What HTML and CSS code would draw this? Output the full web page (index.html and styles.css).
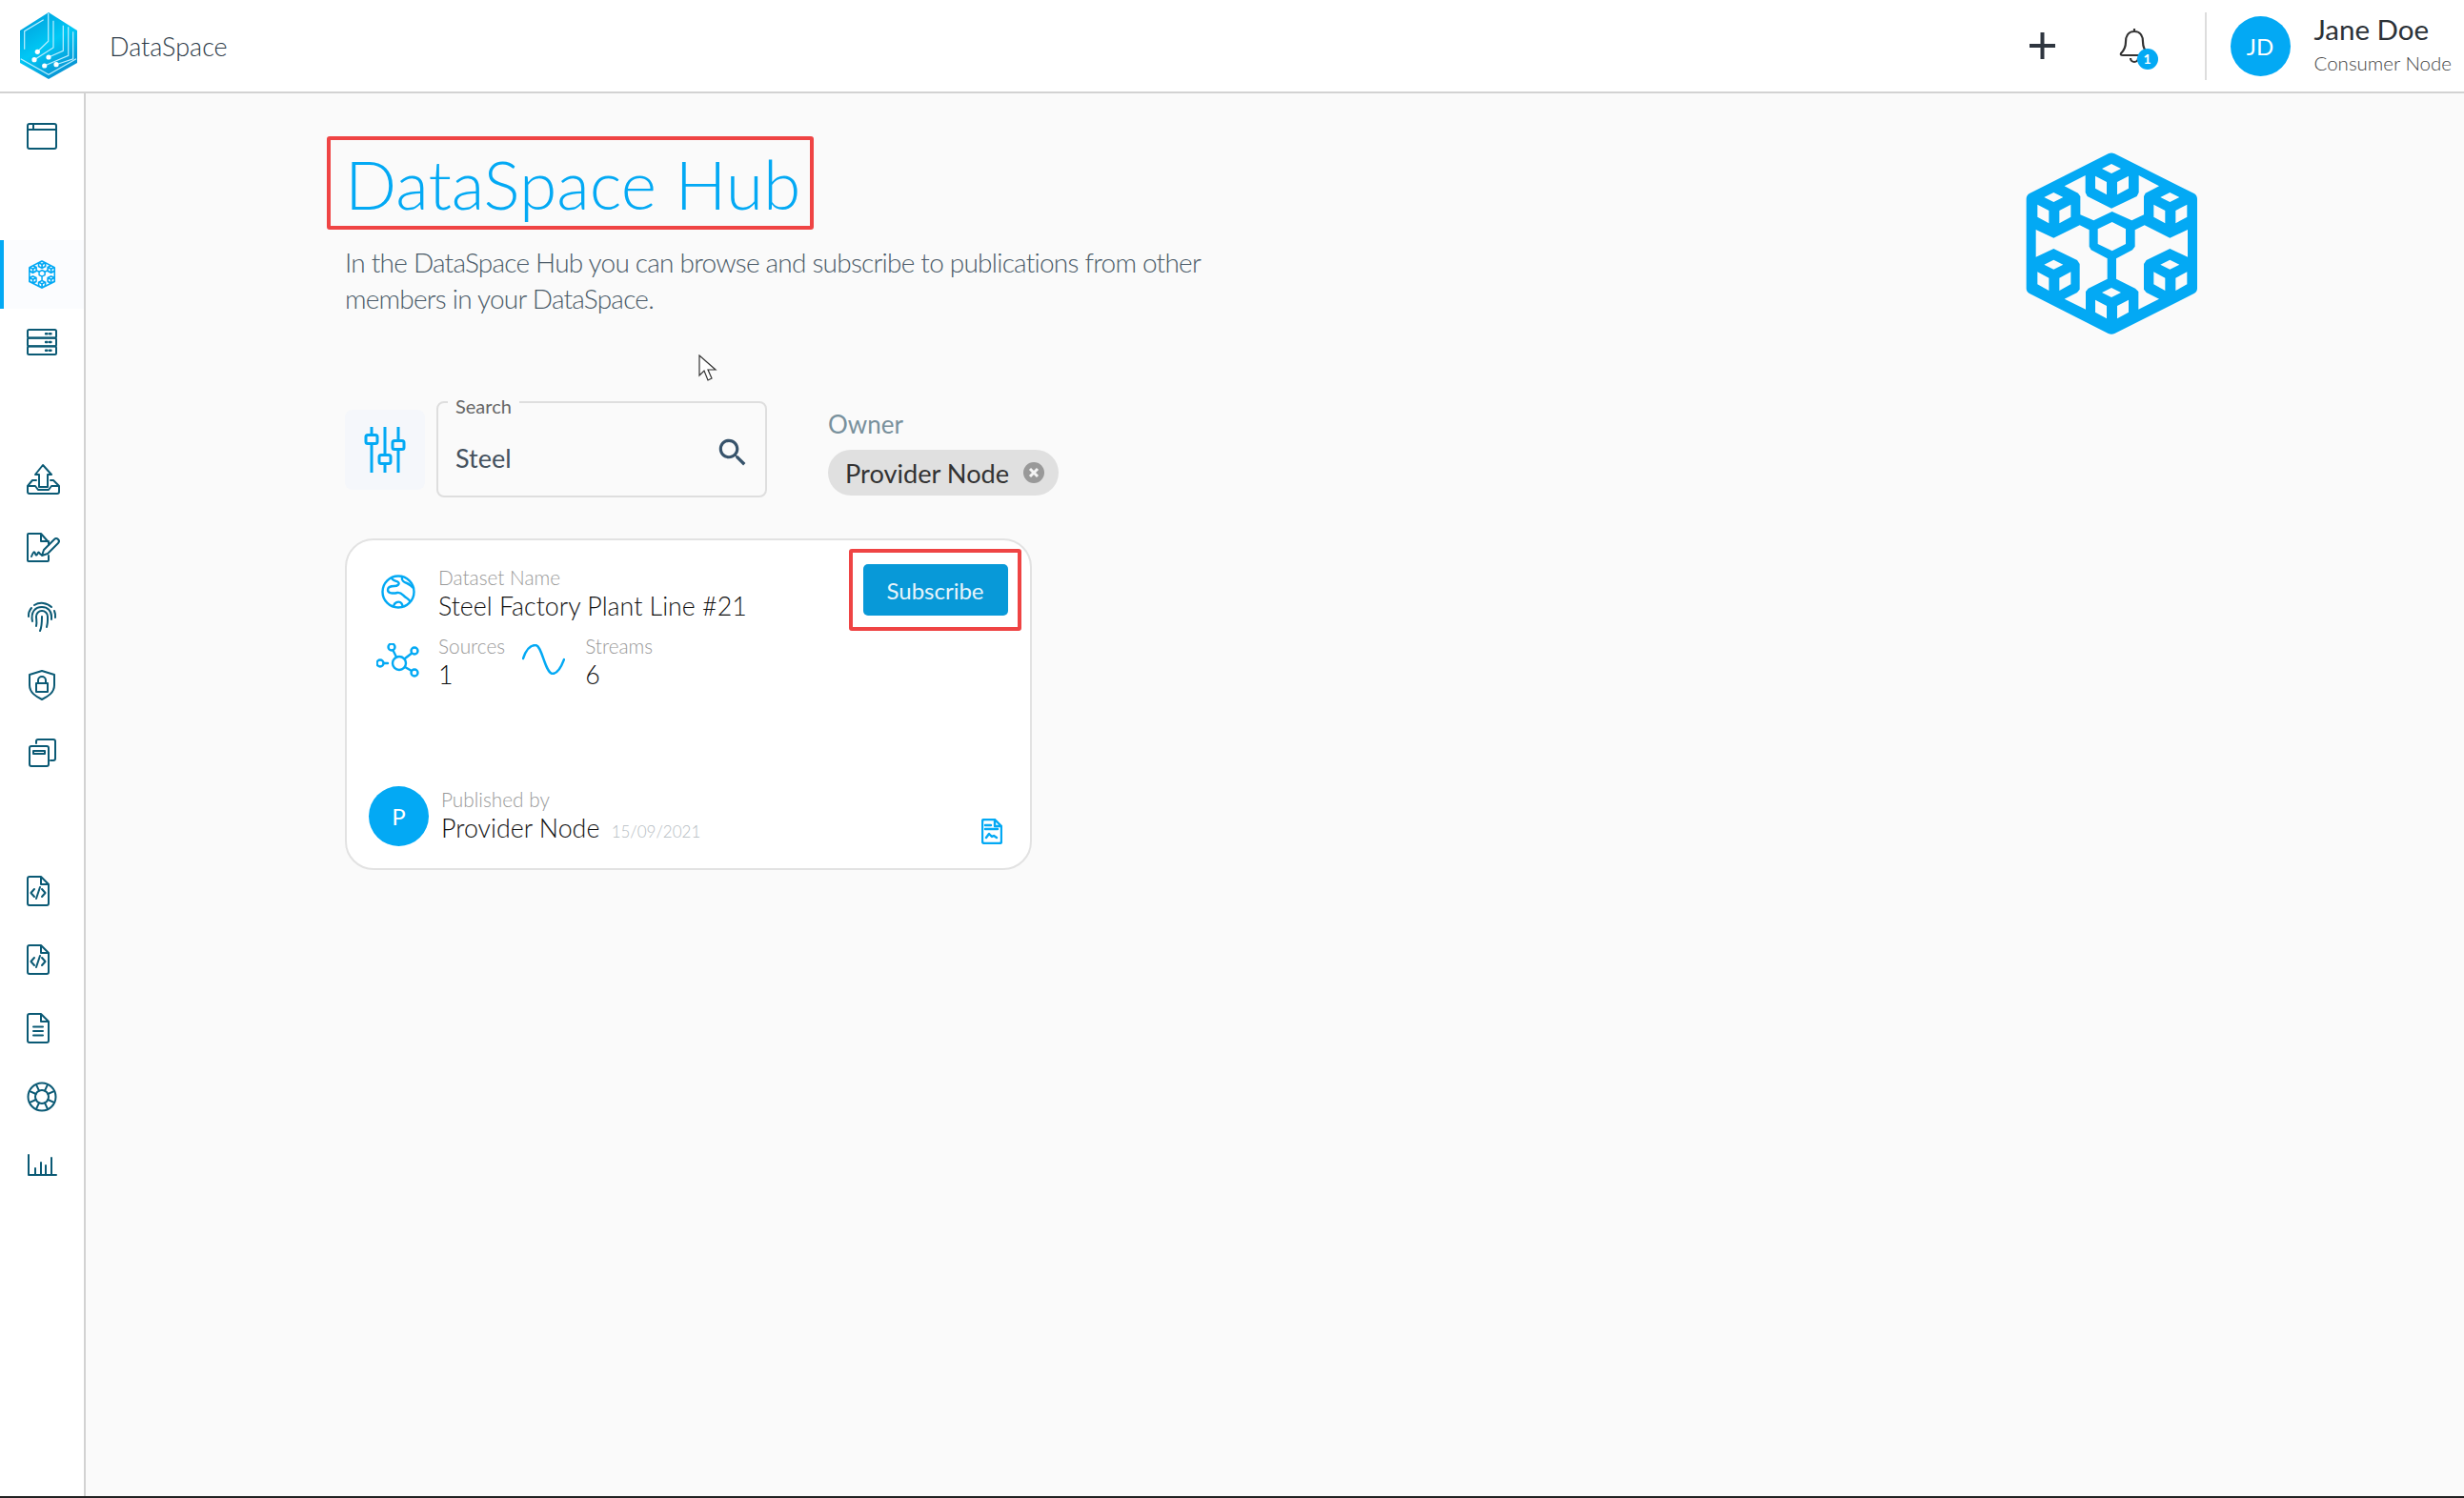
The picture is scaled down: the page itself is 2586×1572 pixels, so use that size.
FILE: index.html
```html
<!DOCTYPE html>
<html lang="en">
<head>
    <meta charset="UTF-8">
    <title>DataSpace Hub</title>
    <link rel="stylesheet" href="styles.css">
</head>
<body>
    <!-- shared hub glyph, used in the sidebar and the page head -->
    <svg class="defs" width="0" height="0">
        <symbol id="hub" viewBox="60 56 576 576">
            <path fill-rule="evenodd" d="M338 63Q348 58 358 63L608 188Q618 194 618 205V487Q618 497 608 503L358 629Q348 634 338 629L90 503Q80 497 80 487V205Q80 194 90 188Z
            M348 95l30 15-30 15-30-15z M297 133l36 19v40l-36-20z M402 133l-36 19v40l36-20z
            M166 185l30 15-30 15-30-15z M115 223l36 19v40l-36-20z M220 223l-36 19v40l36-20z
            M532 185l30 15-30 15-30-15z M481 223l36 19v40l-36-20z M586 223l-36 19v40l36-20z
            M166 397l30 15-30 15-30-15z M115 435l36 19v40l-36-20z M220 435l-36 19v40l36-20z
            M532 397l30 15-30 15-30-15z M481 435l36 19v40l-36-20z M586 435l-36 19v40l36-20z
            M348 485l30 15-30 15-30-15z M297 523l36 19v40l-36-20z M402 523l-36 19v40l36-20z
            M350 278L393 300V347L350 369L305 347V300Z
            M200 165L266 131V185L272 197L348 235L428 197L434 185V131L498 165L455 187L450 197V255L412 273L350 245L292 273L250 255V197L243 187Z
            M110 302L166 328L248 288L278 303V355L284 366L335 393V457L275 487L267 497V553L200 520L240 500L248 490V410L240 398L166 362L110 388Z
            M588 302L532 328L452 288L422 303V355L414 366L363 393V457L423 487L433 497V553L498 520L458 500L450 490V410L458 398L532 362L588 388Z"/>
        </symbol>
        <linearGradient id="logoFill" x1="0.2" y1="0.1" x2="0.7" y2="1">
            <stop offset="0" stop-color="#00a6e0"/>
            <stop offset="0.45" stop-color="#00c8f5"/>
            <stop offset="1" stop-color="#0a8fd0"/>
        </linearGradient>
    </svg>

    <header class="topbar">
        <div class="brand">
            <svg class="brand-logo" viewBox="0 0 62 70" width="62" height="70">
                <path fill="url(#logoFill)" d="M31 0L61 19V53L31 70L1 53V19Z"/>
                <g fill="none" stroke="#bdefff" stroke-width="1.2">
                    <path d="M25.7 7.7L5.7 19.7V38.7"/>
                    <path d="M30.7 1V30.3L19.3 41.3"/>
                    <path d="M36 8.7V37L16 49.7"/>
                    <path d="M46.3 13.7V40.3L31 47"/>
                    <path d="M51.7 15.3V45.3L26.7 56"/>
                    <path d="M56.7 20.3V48.7L39 54.7"/>
                    <path d="M1.7 48.7L31 65.3L60 48.7"/>
                </g>
                <g fill="#fff">
                    <circle cx="19.3" cy="41.3" r="2.6"/>
                    <circle cx="16" cy="49.7" r="2.6"/>
                    <circle cx="31" cy="47" r="2.6"/>
                    <circle cx="26.7" cy="56" r="2.6"/>
                    <circle cx="39" cy="54.7" r="2.6"/>
                </g>
            </svg>
            <span class="brand-name">DataSpace</span>
        </div>
        <div class="topbar-actions">
            <svg class="plus-icon" viewBox="0 0 27 28" width="27" height="28">
                <path d="M13.5 0V28M0 14H27"/>
            </svg>
            <div class="bell">
                <svg viewBox="0 0 32 38" width="32" height="38">
                    <path d="M16 1V4M16 4C9 4 7 10 7 15C7 21 5 24 2 27Q1 29 4 29H28Q31 29 30 27C27 24 25 21 25 15C25 10 23 4 16 4ZM12 32A4 4 0 0 0 20 32"/>
                </svg>
                <span class="bell-badge">1</span>
            </div>
            <div class="user">
                <div class="avatar avatar-user">JD</div>
                <div class="user-text">
                    <div class="user-name">Jane Doe</div>
                    <div class="user-role">Consumer Node</div>
                </div>
            </div>
        </div>
    </header>

    <div class="layout">
        <nav class="sidebar">
            <a class="nav-item">
                <svg class="nav-icon" viewBox="0 0 34 34"><rect x="2" y="4" width="30" height="26" rx="2"/><path d="M2 10H32M8 4V10"/></svg>
            </a>
            <div class="nav-gap"></div>
            <a class="nav-item active">
                <svg class="hub-small"><use href="#hub"/></svg>
            </a>
            <a class="nav-item">
                <svg class="nav-icon" viewBox="0 0 34 34"><rect x="2" y="4" width="30" height="8.5" rx="1.5"/><rect x="2" y="12.8" width="30" height="8.5" rx="1.5"/><rect x="2" y="21.5" width="30" height="8.5" rx="1.5"/><path class="dots" d="M21 8.2h1.5M25 8.2h1.5M21 17h1.5M25 17h1.5M21 25.8h1.5M25 25.8h1.5"/></svg>
            </a>
            <div class="nav-gap"></div>
            <a class="nav-item">
                <svg class="nav-icon" viewBox="0 0 34 34"><path d="M18 2L27 12H23V25H14V12H10Z"/><path d="M11 18H7L2 24V30A2 2 0 0 0 4 32H33A2 2 0 0 0 35 30V24L29 18H26M2 24H10L13 28H24L27 24H35"/></svg>
            </a>
            <a class="nav-item">
                <svg class="nav-icon" viewBox="0 0 34 34"><path d="M24 25V30A1 1 0 0 1 23 31H3A1 1 0 0 1 2 30V3A1 1 0 0 1 3 2H16L24 11V14M16 2V10H24"/><path d="M17 25L19 19L30 8A2.5 2.5 0 0 1 34 12L23 23Z"/><path d="M6 26C8 21 9 20 10 23S12 24 13 22S15 25 17 24"/></svg>
            </a>
            <a class="nav-item">
                <svg class="nav-icon" viewBox="0 0 34 34"><path d="M3 17A14 13 0 0 1 6 8M9 5A14 13 0 0 1 27 7M30 11A14 14 0 0 1 31 18M7 22C5 12 10 7 17 7C23 7 27 11 27 17V20M11 27C12 23 11 20 11 17A6 6 0 0 1 23 17V21C23 24 22.5 26 22 28M15 32C17 28 17 22 17 17"/></svg>
            </a>
            <a class="nav-item">
                <svg class="nav-icon" viewBox="0 0 34 34"><path d="M17 2L30 6V17C30 25 23 29 17 32C11 29 4 25 4 17V6Z"/><rect x="11" y="15" width="12" height="9"/><path d="M13 15V12A4 4 0 0 1 21 12V15"/></svg>
            </a>
            <a class="nav-item">
                <svg class="nav-icon" viewBox="0 0 34 34"><path d="M11 6V4A2 2 0 0 1 13 2H29A2 2 0 0 1 31 4V22A2 2 0 0 1 29 24H26"/><rect x="4" y="9" width="20" height="21" rx="2"/><path d="M8 14H20V17H8Z"/></svg>
            </a>
            <div class="nav-gap"></div>
            <a class="nav-item">
                <svg class="nav-icon" viewBox="0 0 34 34"><path d="M4 2H16L24 10V30A2 2 0 0 1 22 32H4A2 2 0 0 1 2 30V4A2 2 0 0 1 4 2ZM16 2V10H24"/><path d="M9 15L5.5 19L9 23M17 15L20.500 19L17 23M15 13L11 25"/></svg>
            </a>
            <a class="nav-item">
                <svg class="nav-icon" viewBox="0 0 34 34"><path d="M4 2H16L24 10V30A2 2 0 0 1 22 32H4A2 2 0 0 1 2 30V4A2 2 0 0 1 4 2ZM16 2V10H24"/><path d="M9 15L5.5 19L9 23M17 15L20.500 19L17 23M15 13L11 25"/></svg>
            </a>
            <a class="nav-item">
                <svg class="nav-icon" viewBox="0 0 34 34"><path d="M4 2H16L24 10V30A2 2 0 0 1 22 32H4A2 2 0 0 1 2 30V4A2 2 0 0 1 4 2ZM16 2V10H24"/><path d="M8 15.500H18M8 20H18M8 24.500H18"/></svg>
            </a>
            <a class="nav-item">
                <svg class="nav-icon" viewBox="0 0 34 34"><circle cx="17" cy="17" r="14.500"/><circle cx="17" cy="17" r="7"/><path d="M23.300 20L29.700 22.900M20 23.300L22.900 29.700M10.700 20L4.300 22.900M14 23.300L11.100 29.700M23.300 14L29.700 11.100M20 10.700L22.900 4.300M10.700 14L4.300 11.100M14 10.700L11.100 4.300"/></svg>
            </a>
            <a class="nav-item">
                <svg class="nav-icon" viewBox="0 0 34 34"><path d="M3 6V27H32M10 26V20M16 26V14M21 26V17M27 26V9"/></svg>
            </a>
        </nav>

        <main class="content">
            <div class="page-head">
                <div class="page-intro">
                    <h1 class="page-title">DataSpace Hub</h1>
                    <p class="page-desc">In the DataSpace Hub you can browse and subscribe to publications from other members in your DataSpace.</p>
                </div>
                <svg class="hub-large"><use href="#hub"/></svg>
            </div>

            <div class="filters">
                <div class="filter-btn">
                    <svg viewBox="0 0 48 48" width="48" height="48">
                        <path d="M10 0V48M24 0V48M38 0V48"/>
                        <rect x="4" y="8.500" width="12" height="9" rx="2"/>
                        <rect x="18" y="29.500" width="12" height="9" rx="2"/>
                        <rect x="32" y="14.500" width="12" height="9" rx="2"/>
                    </svg>
                </div>
                <div class="search-box">
                    <span class="search-label">Search</span>
                    <span class="search-value">Steel</span>
                    <svg class="search-icon" viewBox="0 0 24 24" width="38" height="38">
                        <path d="M15.500 14h-.79l-.28-.27C15.410 12.590 16 11.110 16 9.500 16 5.910 13.090 3 9.500 3S3 5.910 3 9.500 5.910 16 9.500 16c1.610 0 3.090-.59 4.230-1.570l.27.28v.79l5 4.990L20.490 19l-4.990-5zm-6 0C7.010 14 5 11.990 5 9.500S7.010 5 9.500 5 14 7.010 14 9.500 11.990 14 9.500 14z"/>
                    </svg>
                </div>
                <div class="owner">
                    <div class="owner-label">Owner</div>
                    <div class="chip">
                        <span>Provider Node</span>
                        <svg viewBox="0 0 22 22" width="22" height="22">
                            <circle cx="11" cy="11" r="11"/>
                            <path d="M7 7L15 15M15 7L7 15"/>
                        </svg>
                    </div>
                </div>
            </div>

            <article class="card">
                <div class="card-top">
                    <div class="card-info">
                        <div class="info-row">
                            <div class="info-icon">
                                <svg class="line-icon" viewBox="0 0 36 36" width="36" height="36">
                                    <circle cx="18" cy="18" r="16.500"/>
                                    <path d="M11 3.500C12 7 16 6 18 8S17 12 14 12S7 12 7 16S13 20 17 19S23 22 26 24S30 27 30 28M22 3C21 6 24 8 27 9S31 12 34 14M13 33C14 29 18 28 20 29S23 33 22 34"/>
                                </svg>
                            </div>
                            <div class="info-text">
                                <div class="info-label">Dataset Name</div>
                                <div class="info-value">Steel Factory Plant Line #21</div>
                            </div>
                        </div>
                        <div class="info-row stats-row">
                            <div class="info-icon">
                                <svg class="line-icon" viewBox="0 0 45 36" width="45" height="36">
                                    <circle cx="24" cy="21" r="7"/>
                                    <circle cx="16" cy="4" r="3.500"/>
                                    <circle cx="40" cy="8" r="3.500"/>
                                    <circle cx="4" cy="21" r="3.500"/>
                                    <circle cx="40" cy="31" r="3.500"/>
                                    <path d="M17.500 7.500L21 14.500M36.500 11L30 16M8 21H12M30 25L37 29"/>
                                </svg>
                            </div>
                            <div class="info-text">
                                <div class="info-label">Sources</div>
                                <div class="info-value">1</div>
                            </div>
                            <svg class="line-icon wave" viewBox="0 0 45 32" width="45" height="32">
                                <path d="M1 15C4 6 9 1 14 1C21 1 24 31 32 31C37 31 41 24 44 16"/>
                            </svg>
                            <div class="info-text">
                                <div class="info-label">Streams</div>
                                <div class="info-value">6</div>
                            </div>
                        </div>
                    </div>
                    <div class="subscribe-mark">
                        <button class="subscribe-btn">Subscribe</button>
                    </div>
                </div>
                <div class="card-bottom">
                    <div class="avatar avatar-pub">P</div>
                    <div class="pub-text">
                        <div class="info-label">Published by</div>
                        <div class="info-value">Provider Node <span class="pub-date">15/09/2021</span></div>
                    </div>
                    <svg class="line-icon file-icon" viewBox="0 0 22 27" width="22" height="27">
                        <path d="M3 1H14L21 8V24A2 2 0 0 1 19 26H3A2 2 0 0 1 1 24V3A2 2 0 0 1 3 1ZM14 1V8H21M4 7H10M4 11H17M5 20L8 16L11 19L13 18L16 20"/>
                    </svg>
                </div>
            </article>

            <svg class="cursor" viewBox="0 0 22 28" width="22" height="28">
                <path d="M1 1V22L6 17L10 27L14 25L10 16H18Z"/>
            </svg>
        </main>
    </div>
</body>
</html>
```

FILE: styles.css
```css
* {
    box-sizing: border-box;
}
html, body {
    height: 100%;
}
body {
    margin: 0;
    height: 1572px;
    display: flex;
    flex-direction: column;
    font-family: "Lato", sans-serif;
    font-weight: 300;
    color: #222;
    background-color: #fff;
    border-bottom: 2px solid #222;
    overflow: hidden;
}
.defs {
    position: absolute;
}

/* top bar */
.topbar {
    height: 98px;
    flex-shrink: 0;
    display: flex;
    justify-content: space-between;
    align-items: center;
    background-color: #fff;
    border-bottom: 2px solid #d2d2d2;
    padding: 0 13px 0 20px;
}
.brand {
    display: flex;
    align-items: center;
    gap: 33px;
}
.brand-logo {
    display: block;
}
.brand-name {
    font-size: 27px;
    color: #2c3a47;
}
.topbar-actions {
    display: flex;
    align-items: center;
}
.plus-icon {
    fill: none;
    stroke: #2f3640;
    stroke-width: 4;
    margin-right: 67px;
}
.bell {
    position: relative;
    width: 32px;
    height: 38px;
    margin-right: 58px;
}
.bell svg {
    fill: none;
    stroke: #333;
    stroke-width: 2.2;
    display: block;
}
.bell-badge {
    position: absolute;
    left: 19px;
    top: 22px;
    width: 22px;
    height: 22px;
    border-radius: 50%;
    background-color: #03a9f4;
    color: #fff;
    font-size: 14px;
    font-weight: 700;
    line-height: 22px;
    text-align: center;
}
.user {
    display: flex;
    align-items: center;
    height: 71px;
    border-left: 2px solid #ddd;
    padding-left: 25px;
    gap: 25px;
}
.avatar {
    border-radius: 50%;
    background-color: #03a9f4;
    color: #fff;
    display: flex;
    align-items: center;
    justify-content: center;
    flex-shrink: 0;
    font-weight: 400;
}
.avatar-user {
    width: 63px;
    height: 63px;
    font-size: 24px;
}
.user-text {
    margin-bottom: 3px;
}
.user-name {
    font-size: 29.5px;
    line-height: 36px;
    font-weight: 400;
    color: #2c3238;
}
.user-role {
    font-size: 20.5px;
    line-height: 30px;
    color: #444;
    margin-top: 2px;
}

.layout {
    flex: 1;
    display: flex;
    min-height: 0;
}

/* sidebar */
.sidebar {
    width: 90px;
    flex-shrink: 0;
    background-color: #fff;
    border-right: 2px solid #d2d2d2;
    padding-top: 10px;
}
.nav-item {
    height: 72px;
    display: flex;
    align-items: center;
    justify-content: center;
}
.nav-item.active {
    background-color: #fbfcfe;
    border-left: 4px solid #03a9f4;
    padding-right: 4px;
}
.nav-gap {
    height: 72px;
}
.nav-icon {
    width: 34px;
    height: 34px;
    margin-bottom: 2px;
    fill: none;
    stroke: #0b5a75;
    stroke-width: 2;
    stroke-linejoin: round;
    stroke-linecap: round;
    overflow: visible;
}
.nav-icon .dots {
    stroke-width: 2.4;
}
.hub-small {
    width: 30px;
    height: 30px;
    fill: #03a9f4;
}

/* main */
.content {
    flex: 1;
    position: relative;
    background-color: #fafafa;
    padding: 45px 274px 0 272px;
}
.page-head {
    display: flex;
    justify-content: space-between;
    align-items: flex-start;
}
.page-title {
    margin: 0 0 16px -19px;
    width: 511px;
    height: 98px;
    padding-left: 15px;
    border: 4px solid #ef4444;
    border-radius: 3px;
    font-size: 71.4px;
    font-weight: 300;
    line-height: 91px;
    color: #03a9f4;
    white-space: nowrap;
}
.page-desc {
    margin: 0;
    width: 910px;
    font-size: 28px;
    line-height: 37.5px;
    letter-spacing: -0.77px;
    color: #4a5a68;
}
.hub-large {
    width: 192px;
    height: 192px;
    margin-top: 16px;
    fill: #03a9f4;
}

/* filter row */
.filters {
    display: flex;
    align-items: flex-start;
    margin-top: 70px;
}
.filter-btn {
    width: 84px;
    height: 84px;
    margin-top: 9px;
    margin-right: 12px;
    background-color: #f5f7fb;
    border-radius: 8px;
    display: flex;
    align-items: center;
    justify-content: center;
}
.filter-btn svg {
    fill: none;
    stroke: #03a9f4;
    stroke-width: 3;
}
.filter-btn rect {
    fill: #f5f7fb;
}
.search-box {
    position: relative;
    width: 347px;
    height: 101px;
    border: 2px solid #dedede;
    border-radius: 8px;
    display: flex;
    align-items: center;
    justify-content: space-between;
    padding: 0 15px 0 18px;
    margin-right: 64px;
}
.search-label {
    position: absolute;
    left: 10px;
    top: -9px;
    padding: 0 8px;
    background-color: #fafafa;
    font-size: 20px;
    font-weight: 400;
    line-height: 24px;
    color: #666;
}
.search-value {
    font-size: 27px;
    font-weight: 400;
    color: #45525f;
    margin-top: 17px;
}
.search-icon {
    fill: #37536b;
    margin-top: 6px;
}
.owner-label {
    font-size: 26px;
    line-height: 32px;
    font-weight: 400;
    color: #78909c;
    margin-top: 8px;
}
.chip {
    display: inline-flex;
    align-items: center;
    gap: 15px;
    height: 48px;
    width: 242px;
    margin-top: 11px;
    padding-left: 18px;
    background-color: #e0e0e0;
    border-radius: 24px;
    font-size: 27.2px;
    font-weight: 400;
    color: #333;
    white-space: nowrap;
}
.chip svg circle {
    fill: #999;
}
.chip svg path {
    stroke: #f4f4f4;
    stroke-width: 3;
}

/* dataset card */
.card {
    width: 721px;
    height: 348px;
    margin-top: 43px;
    display: flex;
    flex-direction: column;
    background-color: #fff;
    border: 2px solid #e2e2e2;
    border-radius: 30px;
    padding: 9px 9px 23px 17px;
}
.card-top {
    display: flex;
    justify-content: space-between;
    align-items: flex-start;
}
.card-info {
    margin-top: 15px;
}
.info-row {
    display: flex;
    align-items: flex-start;
}
.stats-row {
    margin-top: 12px;
}
.info-icon {
    width: 79px;
    height: 60px;
    display: flex;
    padding-top: 12px;
    justify-content: center;
    padding-right: 6px;
}
.stats-row .info-icon {
    padding-top: 12px;
}
.info-label {
    font-size: 20.8px;
    line-height: 30px;
    color: #999;
}
.info-value {
    font-size: 26.8px;
    line-height: 30px;
    color: #111;
    white-space: nowrap;
}
.line-icon {
    fill: none;
    stroke: #03a9f4;
    stroke-width: 2.4;
    stroke-linejoin: round;
    stroke-linecap: round;
    flex-shrink: 0;
}
.wave {
    margin: 13px 21px 0 18px;
}
.subscribe-mark {
    width: 181px;
    height: 86px;
    border: 4px solid #ef4444;
    border-radius: 3px;
    display: flex;
    align-items: center;
    justify-content: center;
}
.subscribe-btn {
    width: 152px;
    height: 54px;
    background-color: #0899d8;
    color: #e6f4fb;
    border: none;
    border-radius: 5px;
    font-family: "Lato", sans-serif;
    font-size: 24px;
    font-weight: 400;
}
.card-bottom {
    margin-top: auto;
    display: flex;
    align-items: flex-end;
}
.avatar-pub {
    width: 63px;
    height: 63px;
    margin-left: 6px;
    font-size: 24px;
}
.pub-text {
    margin-left: 13px;
}
.pub-date {
    font-size: 17px;
    color: #b5bcc2;
    margin-left: 5px;
}
.file-icon {
    margin-left: auto;
    margin-right: 20px;
    margin-bottom: 2px;
}

/* mouse pointer caught in the capture */
.cursor {
    position: absolute;
    left: 643px;
    top: 274px;
    fill: #fff;
    stroke: #333;
    stroke-width: 1.2;
}
```
